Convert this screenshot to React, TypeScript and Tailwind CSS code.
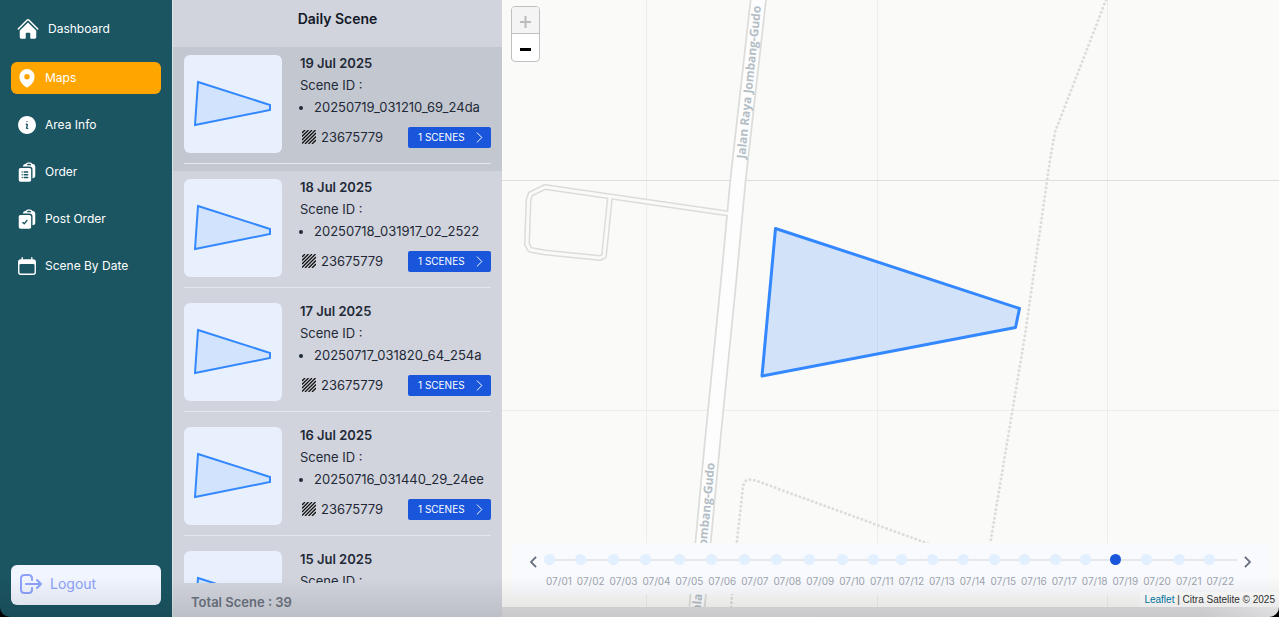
import { useState } from "react"
import {
  HiCalendar,
  HiClipboardDocumentCheck,
  HiClipboardDocumentList,
  HiHome,
  HiInformationCircle,
  HiMapPin,
  HiOutlineChevronRight,
} from "react-icons/hi2"
import { FaChevronLeft, FaChevronRight } from "react-icons/fa6"

interface Scene {
  date: string
  id: string
  area: string
}

const scenes: Scene[] = [
  { date: "19 Jul 2025", id: "20250719_031210_69_24da", area: "23675779" },
  { date: "18 Jul 2025", id: "20250718_031917_02_2522", area: "23675779" },
  { date: "17 Jul 2025", id: "20250717_031820_64_254a", area: "23675779" },
  { date: "16 Jul 2025", id: "20250716_031440_29_24ee", area: "23675779" },
  { date: "15 Jul 2025", id: "20250715_031210_69_24da", area: "23675779" },
]

const navItems = [
  { name: "Maps", icon: <HiMapPin size={22} />, active: true },
  { name: "Area Info", icon: <HiInformationCircle size={22} /> },
  { name: "Order", icon: <HiClipboardDocumentList size={22} /> },
  { name: "Post Order", icon: <HiClipboardDocumentCheck size={22} /> },
  { name: "Scene By Date", icon: <HiCalendar size={22} /> },
]

const days = Array.from({ length: 22 }, (_, i) => `07/${String(i + 1).padStart(2, "0")}`)

function LogoutIcon() {
  return (
    <svg width="22" height="20" viewBox="0 0 22 20" fill="none" stroke="currentColor" strokeWidth="2" strokeLinecap="round" strokeLinejoin="round">
      <path d="M12 6V4.500Q12 1 8.500 1H4.500Q1 1 1 4.500V15.500Q1 19 4.500 19H8.500Q12 19 12 15.500V14M6 10H20.500M17 6 21 10 17 14" />
    </svg>
  )
}

function Sidebar() {
  return (
    <aside className="flex w-[173px] shrink-0 flex-col border-r border-[#dfe3e6] bg-[#1b5562] px-[11px] pt-[13px] pb-3 text-xs text-white">
      <nav className="flex flex-col gap-[15px]">
        <a href="#dashboard" className="mb-[2px] flex h-8 items-center gap-2 pl-[5px]">
          <HiHome size={24} />
          Dashboard
        </a>
        {navItems.map((item) => (
          <a
            key={item.name}
            href="#menu"
            className={`flex h-8 items-center gap-[7px] rounded-md pl-[5px] ${item.active ? "bg-[#ffa500]" : ""}`}
          >
            {item.icon}
            {item.name}
          </a>
        ))}
      </nav>
      <button className="mt-auto flex h-10 items-center gap-2 rounded-md bg-[#f0f5ff] pb-[2px] pl-[9px] text-sm text-[#8da2fb]">
        <LogoutIcon />
        Logout
      </button>
    </aside>
  )
}

function Thumbnail() {
  return (
    <div className="flex h-[98px] w-[98px] shrink-0 items-center justify-center rounded-md bg-[#e8f0fd]">
      <svg width="78" height="48" viewBox="0 0 78 48">
        <path d="M4 2 76 25V30L1 45Z" fill="#3388ff" fillOpacity="0.12" stroke="#3388ff" strokeWidth="2" />
      </svg>
    </div>
  )
}

function HatchIcon() {
  return (
    <svg width="14" height="14" viewBox="0 0 14 14" stroke="#111" strokeWidth="1.3">
      <path d="M0 3 3 0M0 6.5 6.5 0M0 10 10 0M0 13.5 13.5 0M3 14 14 3M6.5 14 14 6.5M10 14 14 10" />
    </svg>
  )
}

function SceneCard({ scene, selected }: { scene: Scene; selected: boolean }) {
  return (
    <li className={`px-[11px] pt-2 pb-[7px] ${selected ? "bg-[#c3c7d0]" : ""}`}>
      <div className="flex gap-[18px] border-b border-[#e5e7eb] pb-[10px]">
        <Thumbnail />
        <div className="flex flex-1 flex-col text-[13px] leading-[22px] whitespace-nowrap text-[#1f2937]">
          <h3 className="-mt-[3px] font-semibold">{scene.date}</h3>
          <p>Scene ID :</p>
          <ul className="list-disc pl-[14px]">
            <li>{scene.id}</li>
          </ul>
          <div className="mt-auto mb-[5px] flex items-center pl-[2px]">
            <HatchIcon />
            <span className="ml-[5px]">{scene.area}</span>
            <button className="ml-auto flex h-[21px] w-[83px] items-center justify-between rounded-xs bg-[#1a56db] pr-1 pl-[10px] text-[10px] text-white">
              1 SCENES
              <HiOutlineChevronRight size={15} />
            </button>
          </div>
        </div>
      </div>
    </li>
  )
}

function ScenePanel() {
  return (
    <section className="flex w-[329px] shrink-0 flex-col bg-[#d1d4dc]">
      <h2 className="h-[47px] shrink-0 pt-2 text-center text-sm leading-[22px] font-semibold text-[#111827]">Daily Scene</h2>
      <ul className="min-h-0 flex-1 overflow-hidden">
        {scenes.map((scene, idx) => (
          <SceneCard key={scene.date} scene={scene} selected={idx === 0} />
        ))}
      </ul>
      <p className="flex h-[34px] shrink-0 items-center pt-[6px] pl-[18px] text-[13px] font-semibold text-[#6b7280]">
        Total Scene : 39
      </p>
    </section>
  )
}

function MapCanvas() {
  const road = "M257 -10 256.300 0 236 180 226.700 280 210.700 440 195 607"
  const side = "M226 213.500 43 187 28.500 194 26.500 200 25 244 28 249.700 43 252.500 98 258 102 256 108 197"
  return (
    <svg className="absolute inset-0 h-full w-full" aria-hidden="true">
      <g shapeRendering="crispEdges">
        <path d="M144.500 0V900M375.500 0V900M605.500 0V900M0 410.500H3000" stroke="#ededec" />
        <path d="M0 180.500H3000" stroke="#dededd" />
      </g>
      <g fill="none" strokeLinejoin="round">
        <path d={side} stroke="#dcdcdb" strokeWidth="6" />
        <path d={road} stroke="#dcdcdb" strokeWidth="17" />
        <path d={side} stroke="#fafaf8" strokeWidth="3" />
        <path d={road} stroke="#fdfdfd" strokeWidth="13.500" />
        <path
          d="M604 0 553 132 548 160 545 181 523 335 488 545M229 607 234.500 545 241 487Q242 479 249 479.500L255 481 430 545"
          stroke="#dcdcdb"
          strokeWidth="3"
          strokeLinecap="round"
          strokeDasharray="0 4.400"
        />
      </g>
      <g className="fill-[#b4bec6] font-['Open_Sans'] text-xs font-bold">
        <text transform="translate(243 159) rotate(-84)">Jalan Raya Jombang-Gudo</text>
        <text transform="translate(198 616) rotate(-84.500)">Jalan Raya Jombang-Gudo</text>
      </g>
      <path
        d="M273.500 228.500 517.500 308.500 513.500 327.500 260 376Z"
        fill="#3388ff"
        fillOpacity="0.2"
        stroke="#3388ff"
        strokeWidth="3"
        strokeLinejoin="round"
      />
    </svg>
  )
}

function Timeline() {
  const [current, setCurrent] = useState("07/19")

  return (
    <div className="absolute inset-x-[10px] bottom-[13px] flex h-[51px] items-start bg-[#f8fafd] px-4 text-[#6b7280]">
      <button aria-label="Previous days" className="mt-[13px] w-4">
        <FaChevronLeft size={12} stroke="currentColor" strokeWidth={24} />
      </button>
      <ol className="flex flex-1 overflow-hidden pt-[11px]">
        {days.map((day) => (
          <li key={day} className="shrink-0 last:grow">
            <button onClick={() => setCurrent(day)} className="block w-full text-left">
              <span className="flex items-center">
                <span className={`size-[11px] rounded-full ${day === current ? "bg-[#1a56db]" : "bg-[#e1effe]"}`} />
                <span className="h-[2px] flex-1 bg-[#e5e7eb]" />
              </span>
              <span className="mt-2 block pr-[3px] pl-[2px] text-[10px] leading-4 text-[#9ca3af]">{day}</span>
            </button>
          </li>
        ))}
      </ol>
      <button aria-label="Next days" className="mt-[13px] flex w-4 justify-end">
        <FaChevronRight size={12} stroke="currentColor" strokeWidth={24} />
      </button>
    </div>
  )
}

function MapView() {
  return (
    <main className="flex min-w-0 flex-1 flex-col">
      <div className="relative min-h-0 flex-1 overflow-hidden bg-[#fafaf8]">
        <MapCanvas />
        <div className="absolute top-[6px] left-[9px] w-[29px] overflow-hidden rounded-sm border border-[#c0c0c0] bg-white">
          <button disabled aria-label="Zoom in" className="flex h-[27px] w-full items-center justify-center border-b border-[#c0c0c0] bg-[#f4f4f4]">
            <svg width="11" height="12" viewBox="0 0 11 12" stroke="#bbb" strokeWidth="2" className="mt-1">
              <path d="M0 6H11M5.500 0V12" />
            </svg>
          </button>
          <button aria-label="Zoom out" className="flex h-[27px] w-full items-center justify-center">
            <svg width="11" height="12" viewBox="0 0 11 12" stroke="#000" strokeWidth="3" className="mt-1">
              <path d="M0 5.500H11" />
            </svg>
          </button>
        </div>
        <Timeline />
        <p className="absolute right-0 bottom-0 bg-white/80 px-1 font-['Liberation_Sans'] text-[10px] leading-[15px] text-[#333]">
          <a href="#leaflet" className="text-[#0078a8]">
            Leaflet
          </a>{" "}
          | Citra Satelite © 2025
        </p>
      </div>
      <div className="h-[10px] shrink-0 bg-linear-to-r from-[#dfdfe2] from-90% to-[#f4f4f6]" />
    </main>
  )
}

export default function App() {
  return (
    <div className="h-screen bg-black font-['Inter',sans-serif]">
      <div className="relative flex h-full overflow-hidden rounded-b-[10px]">
        <Sidebar />
        <ScenePanel />
        <MapView />
        {/* soft shade along the bottom edge of the window */}
        <div className="pointer-events-none absolute inset-x-0 bottom-0 h-10 bg-linear-to-b from-transparent to-black/10" />
      </div>
    </div>
  )
}
